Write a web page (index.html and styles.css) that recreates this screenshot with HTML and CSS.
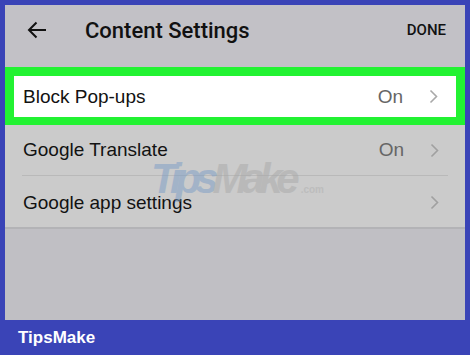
FILE: index.html
```html
<!DOCTYPE html>
<html>
<head>
<meta charset="utf-8">
<link rel="stylesheet" href="styles.css">
</head>
<body>
<div class="frame">
  <div class="screen">
    <div class="header">
      <svg class="back" width="20" height="18" viewBox="0 0 20 18"><path d="M19 9H2.5M9.5 1.5L2 9l7.5 7.5" fill="none" stroke="#111" stroke-width="2"/></svg>
      <div class="title">Content Settings</div>
      <div class="done">DONE</div>
    </div>
    <div class="highlight">
      <div class="row first">
        <span class="label">Block Pop-ups</span>
        <span class="value">On</span>
        <svg class="chev" width="9" height="15" viewBox="0 0 9 15"><path d="M1.5 1.5l6 6-6 6" fill="none" stroke="#a9a9a9" stroke-width="1.6"/></svg>
      </div>
    </div>
    <div class="list">
      <div class="row">
        <span class="label">Google Translate</span>
        <span class="value">On</span>
        <svg class="chev" width="9" height="15" viewBox="0 0 9 15"><path d="M1.5 1.5l6 6-6 6" fill="none" stroke="#a0a0a0" stroke-width="1.6"/></svg>
      </div>
      <div class="sep"></div>
      <div class="row">
        <span class="label">Google app settings</span>
        <svg class="chev" width="9" height="15" viewBox="0 0 9 15"><path d="M1.5 1.5l6 6-6 6" fill="none" stroke="#a0a0a0" stroke-width="1.6"/></svg>
      </div>
    </div>
    <div class="rest"></div>
    <div class="watermark"><span class="wm-t">T</span><span class="wm-ips">ips</span><span class="wm-make">Make</span><span class="wm-com">.com</span></div>
  </div>
  <div class="footer">TipsMake</div>
</div>
</body>
</html>
```

FILE: styles.css
```css
html, body {
  margin: 0;
  padding: 0;
}
body {
  background: #3a44b7;
  width: 470px;
  height: 355px;
  overflow: hidden;
}
.frame {
  padding: 5px 5px 0 5px;
}
.screen {
  position: relative;
  height: 315px;
  background: #c2c1c6;
  display: flex;
  flex-direction: column;
}
.header {
  height: 62px;
  display: flex;
  align-items: center;
  box-sizing: border-box;
  padding-bottom: 12px;
  font-family: Roboto, "Liberation Sans", sans-serif;
  color: #111;
}
.back {
  margin-left: 22px;
  flex: none;
}
.title {
  margin-left: 38px;
  font-size: 22px;
  font-weight: 500;
  flex: 1;
}
.done {
  font-size: 15px;
  font-weight: 500;
  margin-right: 19px;
}
.highlight {
  border: 9px solid #22f232;
  border-bottom-width: 8px;
  background: #ffffff;
}
.row {
  height: 50px;
  display: flex;
  align-items: center;
  padding: 0 26px 0 18px;
  font-family: "Liberation Sans", Arial, sans-serif;
  font-size: 19px;
  color: #121212;
}
.row.first {
  height: 41px;
  padding-left: 9px;
  padding-right: 18px;
}
.label {
  flex: 1;
}
.value {
  color: #666;
  margin-right: 26px;
}
.chev {
  flex: none;
}
.list {
  background: #cbcbcb;
}
.sep {
  height: 1px;
  margin: 0 17px;
  background: #b9b9b9;
}
.list .row:last-child {
  height: 51px;
  padding-top: 2px;
  box-sizing: border-box;
}
.rest {
  flex: 1;
  border-top: 2px solid #b3b3b6;
  background: #c0bfc4;
}
.watermark {
  position: absolute;
  left: 146px;
  top: 150px;
  font-family: "Liberation Sans", Arial, sans-serif;
  font-weight: bold;
  font-style: italic;
  font-size: 42px;
  letter-spacing: -6px;
  opacity: 0.5;
  pointer-events: none;
}
.wm-t, .wm-ips {
  color: #7a9cc6;
}
.wm-make {
  color: #a8a8a8;
}
.wm-com {
  font-size: 10px;
  color: #b0b0b0;
  font-style: normal;
  letter-spacing: 0;
  margin-left: 7px;
}
.footer {
  height: 35px;
  display: flex;
  align-items: center;
  padding-left: 13px;
  font-family: "Liberation Sans", Arial, sans-serif;
  font-weight: bold;
  font-size: 17px;
  color: #ffffff;
}
```
